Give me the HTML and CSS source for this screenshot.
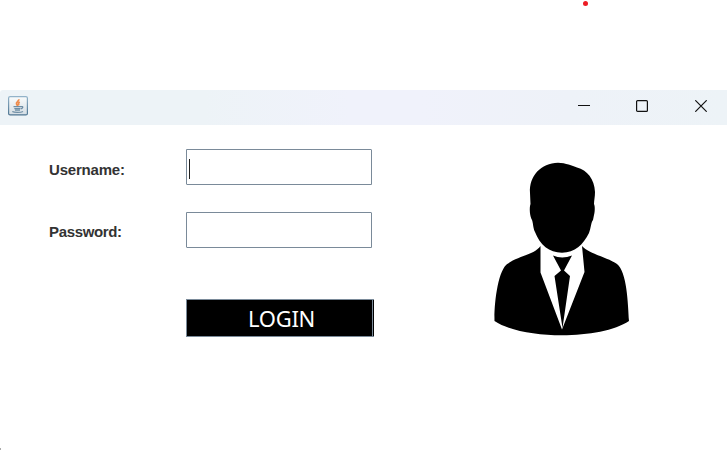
FILE: index.html
```
<!DOCTYPE html>
<html lang="en">
<head>
<meta charset="utf-8">
<title>Login</title>
<link rel="stylesheet" href="styles.css">
</head>
<body>
<span class="marker"></span>
<main class="window">
  <header class="titlebar">
    <svg class="java" width="20" height="20" viewBox="0 0 20 20">
      <defs><linearGradient id="g" x2="0" y2="1"><stop stop-color="#fafcfc"/><stop offset="1" stop-color="#d4dde4"/></linearGradient>
      <linearGradient id="b" x2="0" y2="1"><stop stop-color="#93b3c9"/><stop offset="1" stop-color="#4e7592"/></linearGradient></defs>
      <rect x=".6" y=".6" width="18.8" height="18.3" rx="1.5" fill="url(#g)" stroke="url(#b)" stroke-width="1.2"/>
      <path d="M10.8 3.2c.5 2-3.3 2.8-2.3 4.8.3.8 1 1.300 1.300 2M11.800 6c-2.200 1-1.500 1.900-.9 3.400" fill="none" stroke="#ee8b4c" stroke-width="1.700"/>
      <path d="M5.500 10.700h7.500M6.300 12.700h6.200M7 14.200h5M13 10.700c2.500-.7 2.300 1.500 0 2.100M4.300 15.500c2 1.300 8.500 1.200 10.700 0" fill="none" stroke="#6f8ea5" stroke-width="1.300"/>
    </svg>
    <div class="controls">
      <svg width="12" height="12" viewBox="0 0 12 12"><path d="M0 5.500h12"/></svg>
      <svg width="12" height="12" viewBox="0 0 12 12"><rect x=".6" y=".6" width="10.800" height="10.800" rx="1"/></svg>
      <svg width="12" height="12" viewBox="0 0 12 12"><path d="M.3.300l11.400 11.400M11.700.300L.3 11.700"/></svg>
    </div>
  </header>
  <section class="content">
    <form class="form">
      <label class="name">Username:</label>
      <div class="field"><span class="caret"></span></div>
      <label class="name password">Password:</label>
      <div class="field"></div>
      <button class="login" type="button">LOGIN</button>
    </form>
    <svg class="portrait" width="160" height="200" viewBox="0 0 160 200">
      <path d="M78 12.800C86 13 92 16 97 17.500C107 20 114.500 29 115 42C115 47 114 50 114 54C115 56 115 61 114 65L113 70C111 72 111 78 109 83C103 95 95 102.500 82 102.800C69 102.500 60 95 55 82C53 78 53 72 52 70C50 67 49 58 50.500 54L50 43C49 26 61 13 78 12.800Z"/>
      <path d="M60.500 96V122.500L82 179.500L104.500 122L102 96C109 104 127 107 137 114C147 122 148 153 149 171C121 190 43 190 14.500 171C14 154 18 119 28 113.500C38 106 54 105 60.500 96Z"/>
      <path d="M73 105.500Q82 109.500 92 105.500L84 120.500L90 126L82.500 178L74.500 126L81 120.500Z"/>
    </svg>
  </section>
</main>
<span class="corner"></span>
</body>
</html>
```
FILE: styles.css
```
* { box-sizing: border-box; }
body {
  margin: 0;
  height: 450px;
  padding-top: 90px;
  overflow: hidden;
  background: #fff;
  font-family: "Liberation Sans", Arial, sans-serif;
}
.marker {
  position: absolute;
  left: 583px;
  top: 1px;
  width: 5px;
  height: 5px;
  border-radius: 50%;
  background: #ed1c24;
}
.corner {
  position: absolute;
  left: 0;
  bottom: 0;
  width: 1px;
  height: 2px;
  background: #aaa;
}
.window { height: 360px; }
.titlebar {
  display: flex;
  justify-content: space-between;
  height: 35px;
  padding: 6px 20px 0 8px;
  border-top-left-radius: 3px;
  background: linear-gradient(90deg, #edf3f7 0%, #edf3f7 28%, #f0f2fb 48%, #f0f2fb 58%, #eef2f8 78%, #edf3f7 100%);
}
.controls {
  display: flex;
  gap: 47px;
  padding-top: 4px;
}
.controls svg {
  fill: none;
  stroke: #111;
  stroke-width: 1.2;
}
.controls svg:first-child {
  margin-right: -1px;
  stroke-width: 1;
}
.content {
  display: flex;
  padding-top: 24px;
}
.form {
  display: grid;
  grid-template-columns: 137px 188px;
  grid-template-rows: 36px 36px 38px;
  row-gap: 27px;
  width: 480px;
  padding-left: 49px;
}
.name {
  padding-top: 12px;
  font-size: 15px;
  line-height: 17px;
  font-weight: bold;
  letter-spacing: -0.2px;
  color: #333;
}
.password {
  padding-top: 11px;
  letter-spacing: -0.35px;
}
.field {
  width: 186px;
  height: 36px;
  padding: 9px 0 0 3px;
  border: 1px solid #7a8a99;
  border-top-right-radius: 1px;
  border-bottom-left-radius: 1px;
}
.caret {
  display: block;
  width: 1px;
  height: 20px;
  margin-left: -1px;
  background: #222;
}
.login {
  grid-column: 2;
  height: 38px;
  margin-top: 24px;
  padding: 0 0 0 2px;
  border: 1px solid #7a8a99;
  border-right: 0;
  box-shadow: inset -1px 0 #000, inset -2px 0 #7a8a99;
  background: #000;
  color: #fff;
  font: 22px/36px "Noto Sans", sans-serif;
  letter-spacing: -0.3px;
}
.portrait { margin-top: 1px; }
```
